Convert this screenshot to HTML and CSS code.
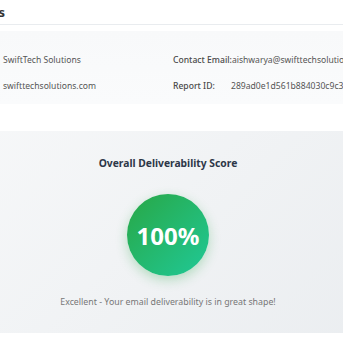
FILE: index.html
```html
<!DOCTYPE html>
<html>
<head>
    <meta name="viewport" content="width=device-width, initial-scale=1.0">
    <title>Deliverability Report</title>
    <link rel="stylesheet" href="styles.css">
</head>
<body>
    <div class="report">
        <div class="report-header">
            <h2 class="report-title">Report Details</h2>
        </div>

        <!-- Company info -->
        <div class="info-panel">
            <div class="info-row">
                <span class="info-label">Company:</span>
                <span class="info-value">SwiftTech Solutions</span>
            </div>
            <div class="info-row">
                <span class="info-label">Contact Email:</span>
                <span class="info-value">aishwarya@swifttechsolutions.com</span>
            </div>
            <div class="info-row">
                <span class="info-label">Domain:</span>
                <span class="info-value">swifttechsolutions.com</span>
            </div>
            <div class="info-row">
                <span class="info-label">Report ID:</span>
                <span class="info-value">289ad0e1d561b884030c9c3f</span>
            </div>
        </div>

        <!-- Score -->
        <div class="score-panel">
            <h3 class="score-title">Overall Deliverability Score</h3>
            <div class="score-circle">100%</div>
            <p class="score-text">Excellent - Your email deliverability is in great shape!</p>
        </div>
    </div>
</body>
</html>
```

FILE: styles.css
```css
html, body {
    margin: 0;
    padding: 0;
    background: #fff;
    overflow: hidden;
    font-family: "Noto Sans", "Open Sans", Arial, sans-serif;
}

.report {
    width: 576px;
    margin-left: -120px;
}

.report-header {
    padding: 2px 20px 0 20px;
    border-bottom: 1px solid #e9ecef;
    height: 22px;
}

.report-title {
    margin: 0;
    font-size: 13px;
    font-weight: 700;
    color: #333;
    line-height: 20px;
    text-align: right;
    width: 105px;
}

.info-panel {
    margin: 6px 20px 0 20px;
    padding: 21px 20px 10px 20px;
    background: linear-gradient(to bottom, #f8f9fa, #fafbfc);
    border-radius: 8px;
    display: grid;
    grid-template-columns: 253px 1fr;
    row-gap: 10px;
}

.info-row {
    display: flex;
    white-space: nowrap;
    font-size: 8.6px;
    line-height: 16px;
    color: #555;
}

.info-label {
    min-width: 58px;
    font-weight: 500;
    color: #4a4a4a;
}

.info-row:nth-child(odd) .info-label {
    min-width: 83px;
}

.info-value {
    color: #555;
}

.score-panel {
    margin-top: 27px;
    padding: 22px 20px 20px 20px;
    height: 160px;
    background: linear-gradient(135deg, #f8f9fa, #e9ecef);
    display: flex;
    flex-direction: column;
    align-items: center;
}

.score-title {
    margin: 0;
    font-size: 10.3px;
    font-weight: 700;
    color: #2d3748;
    line-height: 20px;
}

.score-circle {
    margin-top: 21px;
    width: 82px;
    height: 82px;
    border-radius: 50%;
    background: linear-gradient(135deg, #28a745, #20c997);
    box-shadow: 0 4px 12px rgba(40, 167, 69, 0.3);
    color: #fff;
    font-size: 24px;
    font-weight: 700;
    display: flex;
    align-items: center;
    justify-content: center;
}

.score-text {
    margin: 18px 0 0 0;
    font-size: 8.8px;
    color: #777;
    line-height: 16px;
}
```
